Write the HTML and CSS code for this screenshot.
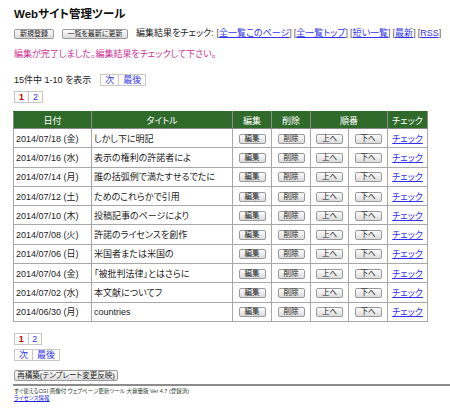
FILE: index.html
```html
<!DOCTYPE html>
<html lang="ja">
<head>
<meta charset="utf-8">
<title>Webサイト管理ツール</title>
<link rel="stylesheet" href="styles.css">
</head>
<body>
<h1 class="title">Webサイト管理ツール</h1>
<div class="toolbar">
  <button class="btn btn-top">新規登録</button>
  <button class="btn btn-top">一覧を最新に更新</button>
  <span class="check-label">編集結果をチェック:</span>
  <span class="links">
    <span class="br">[<a href="#">全一覧このページ</a>]</span>
    <span class="br">[<a href="#">全一覧トップ</a>]</span>
    <span class="br">[<a href="#">短い一覧</a>]</span>
    <span class="br">[<a href="#">最新</a>]</span>
    <span class="br">[<a href="#">RSS</a>]</span>
  </span>
</div>
<p class="msg">編集が完了しました。編集結果をチェックして下さい。</p>
<div class="count-row">
  <span class="count">15件中 1-10 を表示</span>
  <div class="box nav-box"><a href="#" class="cell">次</a><a href="#" class="cell">最後</a></div>
</div>
<div class="box pager"><span class="cell cur">1</span><a href="#" class="cell">2</a></div>

<table class="list">
  <colgroup>
    <col class="c-date"><col class="c-title"><col class="c-btn"><col class="c-btn"><col class="c-ord"><col class="c-btn"><col class="c-chk">
  </colgroup>
  <thead>
    <tr><th>日付</th><th>タイトル</th><th>編集</th><th>削除</th><th colspan="2">順番</th><th>チェック</th></tr>
  </thead>
  <tbody>
    <tr><td class="date">2014/07/18 (金)</td><td class="ttl">しかし下に明記</td><td><button class="btn sm">編集</button></td><td><button class="btn sm">削除</button></td><td><button class="btn sm">上へ</button></td><td><button class="btn sm">下へ</button></td><td><a href="#">チェック</a></td></tr>
    <tr><td class="date">2014/07/16 (水)</td><td class="ttl">表示の権利の許諾者によ</td><td><button class="btn sm">編集</button></td><td><button class="btn sm">削除</button></td><td><button class="btn sm">上へ</button></td><td><button class="btn sm">下へ</button></td><td><a href="#">チェック</a></td></tr>
    <tr><td class="date">2014/07/14 (月)</td><td class="ttl">誰の括弧例で満たすせるでたに</td><td><button class="btn sm">編集</button></td><td><button class="btn sm">削除</button></td><td><button class="btn sm">上へ</button></td><td><button class="btn sm">下へ</button></td><td><a href="#">チェック</a></td></tr>
    <tr><td class="date">2014/07/12 (土)</td><td class="ttl">ためのこれらかで引用</td><td><button class="btn sm">編集</button></td><td><button class="btn sm">削除</button></td><td><button class="btn sm">上へ</button></td><td><button class="btn sm">下へ</button></td><td><a href="#">チェック</a></td></tr>
    <tr><td class="date">2014/07/10 (木)</td><td class="ttl">投稿記事のページにより</td><td><button class="btn sm">編集</button></td><td><button class="btn sm">削除</button></td><td><button class="btn sm">上へ</button></td><td><button class="btn sm">下へ</button></td><td><a href="#">チェック</a></td></tr>
    <tr><td class="date">2014/07/08 (火)</td><td class="ttl">許諾のライセンスを創作</td><td><button class="btn sm">編集</button></td><td><button class="btn sm">削除</button></td><td><button class="btn sm">上へ</button></td><td><button class="btn sm">下へ</button></td><td><a href="#">チェック</a></td></tr>
    <tr><td class="date">2014/07/06 (日)</td><td class="ttl">米国者または米国の</td><td><button class="btn sm">編集</button></td><td><button class="btn sm">削除</button></td><td><button class="btn sm">上へ</button></td><td><button class="btn sm">下へ</button></td><td><a href="#">チェック</a></td></tr>
    <tr><td class="date">2014/07/04 (金)</td><td class="ttl">「被批判法律」とはさらに</td><td><button class="btn sm">編集</button></td><td><button class="btn sm">削除</button></td><td><button class="btn sm">上へ</button></td><td><button class="btn sm">下へ</button></td><td><a href="#">チェック</a></td></tr>
    <tr><td class="date">2014/07/02 (水)</td><td class="ttl">本文献についてフ</td><td><button class="btn sm">編集</button></td><td><button class="btn sm">削除</button></td><td><button class="btn sm">上へ</button></td><td><button class="btn sm">下へ</button></td><td><a href="#">チェック</a></td></tr>
    <tr><td class="date">2014/06/30 (月)</td><td class="ttl">countries</td><td><button class="btn sm">編集</button></td><td><button class="btn sm">削除</button></td><td><button class="btn sm">上へ</button></td><td><button class="btn sm">下へ</button></td><td><a href="#">チェック</a></td></tr>
  </tbody>
</table>

<div class="box pager pager-bottom"><span class="cell cur">1</span><a href="#" class="cell">2</a></div>
<div class="box nav-box nav-bottom"><a href="#" class="cell">次</a><a href="#" class="cell">最後</a></div>
<button class="btn btn-rebuild">再構築(テンプレート変更反映)</button>
<div class="footer">
  <div class="credit">すぐ使えるCGI 画像付 ウェブページ更新ツール 大容量版 Ver 4.7 (登録済)</div>
  <a href="#" class="license">ライセンス情報</a>
</div>
</body>
</html>
```

FILE: styles.css
```css
html, body {
  margin: 0;
  padding: 0;
  background: #fff;
}
body {
  padding: 7px 0 0 13px;
  font-family: "Liberation Sans", "Noto Sans CJK JP", sans-serif;
  font-feature-settings: "palt";
  font-size: 9px;
  color: #222;
}
a { color: #3333ee; }

.title {
  margin: 0;
  font-size: 11.5px;
  line-height: 15px;
  font-weight: bold;
  color: #111;
  padding-left: 1px;
}

.toolbar {
  display: flex;
  align-items: center;
  margin-top: 6px;
  height: 11px;
  padding-left: 1px;
  line-height: 11px;
}
.btn {
  font-family: inherit;
  font-feature-settings: "palt";
  font-size: 7px;
  line-height: 8px;
  color: #222;
  height: 10px;
  padding: 0 5px;
  margin: 0;
  border: 1px solid #9a9a9a;
  border-radius: 2px;
  background: linear-gradient(#fbfbfb, #dcdcdc);
  box-sizing: border-box;
  white-space: nowrap;
}
.btn-top { margin-right: 8px; width: 40px; padding: 0; }
.btn-top + .btn-top { width: 66px; }
.check-label { margin-right: 3px; }
.links { display: flex; align-items: baseline; gap: 2px; color: #555; }
.links .br { display: inline-block; line-height: 11px; }
.links a { color: #3333ee; }

.msg {
  margin: 8px 0 0 1px;
  line-height: 15px;
  color: #cc3399;
}

.count-row {
  display: flex;
  align-items: center;
  margin-top: 11px;
  padding-left: 1px;
}
.count { margin-right: 9px; }

.box {
  display: inline-flex;
  border: 1px solid #c8c8c8;
  height: 12px;
  box-sizing: border-box;
}
.cell {
  display: flex;
  align-items: center;
  justify-content: center;
  text-decoration: none;
  color: #3333ee;
}
.cell + .cell { border-left: 1px solid #c8c8c8; }
.nav-box .cell:first-child { width: 17px; }
.nav-box .cell:last-child { width: 26px; }
.pager { margin-top: 5px; margin-left: 1px; }
.pager .cell { width: 13px; }
.cur { color: #cc0000; font-weight: bold; }

.list {
  border-collapse: collapse;
  table-layout: fixed;
  width: 414px;
  margin-top: 8px;
  border: 1px solid #8a8a8a;
}
.c-date { width: 78px; }
.c-title { width: 141px; }
.c-btn { width: 39px; }
.c-ord { width: 38px; }
.c-chk { width: 40px; }
.list th {
  background: #2f6a2a;
  color: #fff;
  font-weight: normal;
  height: 16px;
  padding: 0;
  border: 1px solid #8a8a8a;
  border-top-color: #2f6a2a;
}
.list td {
  height: 18.3px;
  padding: 0;
  border: 1px solid #a8a8a8;
  text-align: center;
  white-space: nowrap;
  overflow: hidden;
}
.list td.date, .list td.ttl { text-align: left; padding-left: 2px; }
.btn.sm { width: 27px; padding: 0; font-size: 7.5px; }

.pager-bottom { margin-top: 11px; display: flex; width: 28px; }
.nav-bottom { margin-top: 4px; margin-left: 1px; display: flex; width: 46px; }
.btn-rebuild {
  display: block;
  margin: 9px 0 0 1px;
  width: 104px;
  height: 11px;
  padding: 0;
  font-size: 7.5px;
  line-height: 9px;
}

.footer {
  margin-top: 3px;
  border-top: 2px solid #8c8c8c;
  padding: 2px 0 0 1px;
  font-size: 5.5px;
  line-height: 7px;
}
.credit { color: #1d3a1d; }
.license { color: #2222dd; }
```
